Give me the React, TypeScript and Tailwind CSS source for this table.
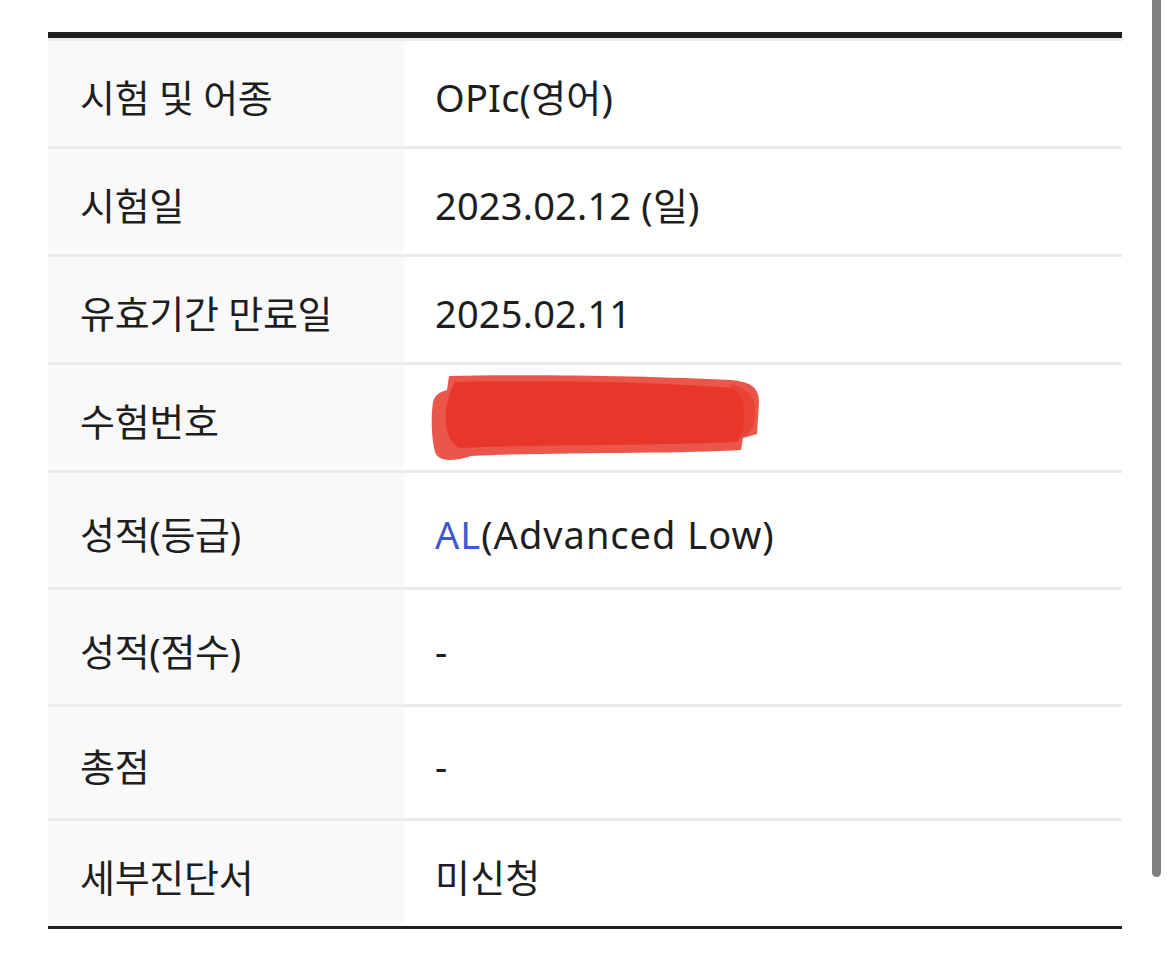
import React from "react";

type Row = { label: string; value: React.ReactNode; h: string };

const Redacted = () => (
  <svg width="332" height="94" viewBox="0 0 332 94" className="-ml-[4px] -mt-[6px]">
    <g fill="#e8372a">
      <path d="M18 4 C100 2 220 4 300 8 C318 10 328 14 328 30 L326 62 L312 66 L310 78 C250 82 120 80 40 84 C22 90 8 90 4 80 C0 64 0 44 2 30 C4 22 10 20 16 18 Z" opacity="0.85" />
      <path d="M24 10 C120 8 230 10 300 16 C316 20 316 56 306 70 C220 74 120 72 30 76 C14 72 8 40 24 10 Z" />
      <path d="M300 12 C318 16 326 26 324 46 C322 58 316 64 308 66 Z" opacity="0.6" />
    </g>
  </svg>
);

const rows: Row[] = [
  { label: "시험 및 어종", value: "OPIc(영어)", h: "h-[108px]" },
  { label: "시험일", value: "2023.02.12 (일)", h: "h-[108px]" },
  { label: "유효기간 만료일", value: "2025.02.11", h: "h-[108px]" },
  { label: "수험번호", value: <Redacted />, h: "h-[108px]" },
  {
    label: "성적(등급)",
    value: (
      <span className="tracking-[1px]">
        <span className="text-[#3f58cc]">AL</span>(Advanced Low)
      </span>
    ),
    h: "h-[117px]",
  },
  { label: "성적(점수)", value: "-", h: "h-[117px]" },
  { label: "총점", value: "-", h: "h-[114px]" },
  { label: "세부진단서", value: "미신청", h: "h-[108px]" },
];

export default function App() {
  return (
    <div
      className="relative w-[1169px] h-[969px] bg-white text-[#1e1e1e] overflow-hidden"
      style={{ fontFamily: '"Noto Sans", "Noto Sans CJK KR", sans-serif' }}
    >
      <div className="ml-[48px] w-[1074px] pt-[32px]">
        <div className="border-t-[6px] border-b-[3px] border-[#1f1f1f]">
          {rows.map((r) => (
            <div key={r.label} className={`flex border-t-[3px] border-[#ebebeb] ${r.h}`}>
              <div className="w-[356px] shrink-0 bg-[#f9f9f9] flex items-center pl-[32px] pt-[8px] text-[38px] tracking-[-0.3px]">
                {r.label}
              </div>
              <div className="flex-1 flex items-center pl-[31px] pt-[8px] text-[38px] tracking-[0.2px]">
                {r.value}
              </div>
            </div>
          ))}
        </div>
      </div>
      <div className="absolute left-[1152px] top-0 w-[9px] h-[877px] bg-[#808080] rounded-b-full" />
    </div>
  );
}
